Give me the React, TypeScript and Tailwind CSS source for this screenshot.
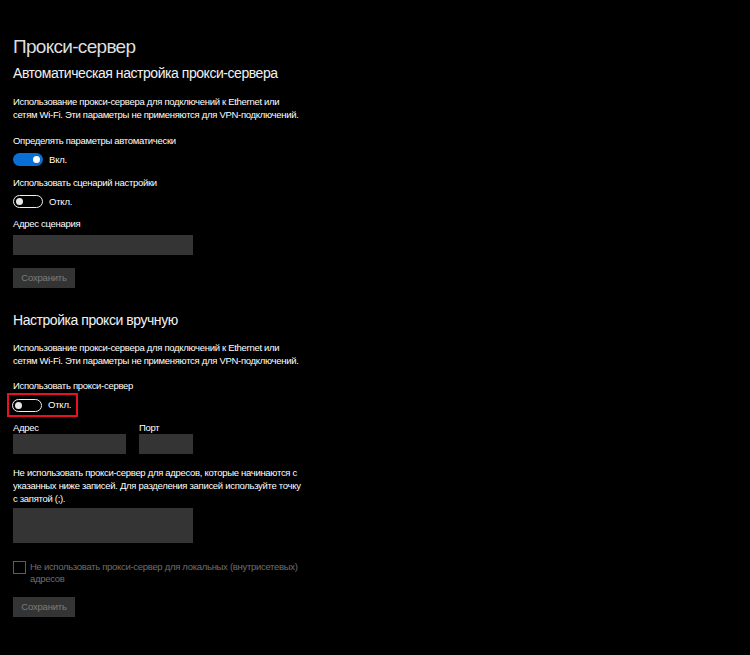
import React from 'react';

const font = { fontFamily: '"Liberation Sans", Arial, sans-serif' };

function Toggle({ on }: { on: boolean }) {
  return on ? (
    <div className="flex h-[13px] w-[30px] items-center justify-end rounded-full bg-[#0a6fd4] pr-[3px]">
      <div className="h-[7px] w-[7px] rounded-full bg-white" />
    </div>
  ) : (
    <div className="flex h-[13px] w-[30px] items-center rounded-full border-[1.5px] border-[#f0f0f0] pl-[2px]">
      <div className="h-[7px] w-[7px] rounded-full bg-[#e6e6e6]" />
    </div>
  );
}

function ToggleRow({ on, label }: { on: boolean; label: string }) {
  return (
    <div className="flex h-[13px] items-center gap-[6px]">
      <Toggle on={on} />
      <span className="text-[9.5px] leading-[12px] tracking-[-0.2px] text-white">{label}</span>
    </div>
  );
}

function SaveButton({ className = '' }: { className?: string }) {
  return (
    <div
      className={`flex h-[20px] w-[62px] items-center justify-center bg-[#343434] text-[9.5px] tracking-[-0.2px] text-[#7c7c7c] ${className}`}
    >
      Сохранить
    </div>
  );
}

const body = 'text-[9.5px] tracking-[-0.3px]';

export default function App() {
  return (
    <div className="h-[655px] w-[750px] overflow-hidden bg-black text-white" style={font}>
      <div className="flex flex-col whitespace-nowrap pl-[13px] pt-[33px]">
        <h1 className="h-[28px] text-[19px] leading-[28px] tracking-[-0.7px] text-[#dedede]">Прокси-сервер</h1>
        <h2 className="mt-[2px] h-[20px] text-[14px] leading-[20px] tracking-[-0.45px] text-[#f2f2f2]">
          Автоматическая настройка прокси-сервера
        </h2>
        <p className={`mt-[12px] leading-[13px] ${body}`}>
          Использование прокси-сервера для подключений к Ethernet или
          <br />
          сетям Wi-Fi. Эти параметры не применяются для VPN-подключений.
        </p>

        <div className={`mt-[13px] leading-[14px] ${body}`}>Определять параметры автоматически</div>
        <div className="mt-[5px]">
          <ToggleRow on label="Вкл." />
        </div>

        <div className={`mt-[10px] leading-[14px] ${body}`}>Использовать сценарий настройки</div>
        <div className="mt-[5px]">
          <ToggleRow on={false} label="Откл." />
        </div>

        <div className={`mt-[9px] leading-[14px] ${body}`}>Адрес сценария</div>
        <div className="mt-[4px] h-[20px] w-[180px] bg-[#343434]" />
        <SaveButton className="mt-[13px]" />

        <h2 className="mt-[22px] h-[20px] text-[14px] leading-[20px] tracking-[-0.45px] text-[#f2f2f2]">
          Настройка прокси вручную
        </h2>
        <p className={`mt-[11px] leading-[13px] ${body}`}>
          Использование прокси-сервера для подключений к Ethernet или
          <br />
          сетям Wi-Fi. Эти параметры не применяются для VPN-подключений.
        </p>

        <div className={`mt-[12px] leading-[14px] ${body}`}>Использовать прокси-сервер</div>
        <div className="ml-[-6px] flex h-[24px] w-[71px] items-center border-2 border-[#e81123] pl-[3px]">
          <ToggleRow on={false} label="Откл." />
        </div>

        <div className="mt-[5px] flex gap-[13px]">
          <div className="flex w-[113px] flex-col">
            <span className={`leading-[12px] ${body}`}>Адрес</span>
            <div className="h-[20px] bg-[#343434]" />
          </div>
          <div className="flex w-[54px] flex-col">
            <span className={`leading-[12px] ${body}`}>Порт</span>
            <div className="h-[20px] bg-[#343434]" />
          </div>
        </div>

        <p className={`mt-[12px] leading-[13px] ${body}`}>
          Не использовать прокси-сервер для адресов, которые начинаются с
          <br />
          указанных ниже записей. Для разделения записей используйте точку
          <br />
          с запятой (;).
        </p>
        <div className="mt-[3px] h-[35px] w-[180px] bg-[#343434]" />

        <div className="mt-[18px] flex items-start gap-[4px]">
          <div className="h-[13px] w-[13px] shrink-0 border-[1.5px] border-[#5c5c5c]" />
          <span className={`leading-[12px] text-[#6e6e6e] ${body}`}>
            Не использовать прокси-сервер для локальных (внутрисетевых)
            <br />
            адресов
          </span>
        </div>

        <SaveButton className="mt-[12px]" />
      </div>
    </div>
  );
}
